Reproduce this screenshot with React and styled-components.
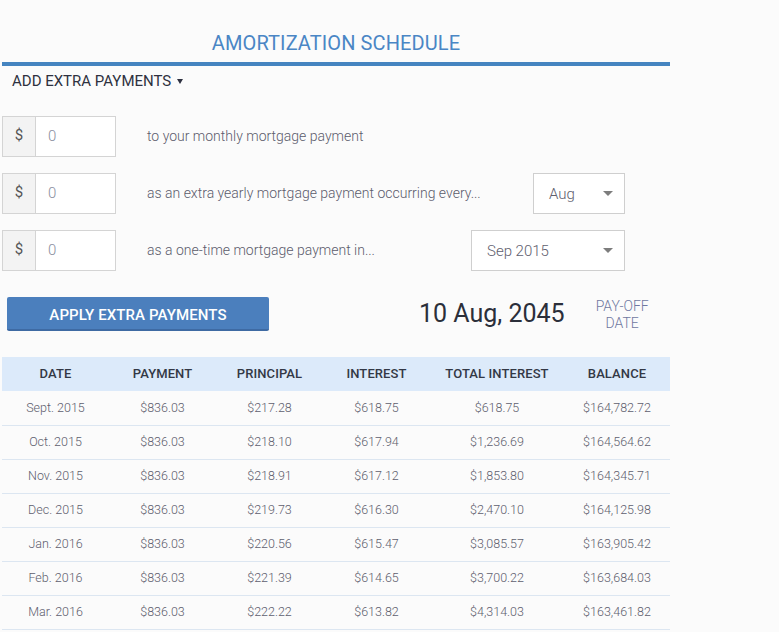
import React from "react";
import styled, { createGlobalStyle } from "styled-components";

const Global = createGlobalStyle`
  html, body { margin: 0; padding: 0; background: #fbfbfb; }
  body { font-family: Roboto, "Liberation Sans", Arial, sans-serif; }
  * { box-sizing: border-box; }
`;

const Page = styled.div`
  width: 668px;
  margin-left: 2px;
  padding-top: 30px;
`;

const Title = styled.h1`
  margin: 0;
  font-size: 20px;
  line-height: 26px;
  font-weight: 400;
  color: #4a86c5;
  text-align: center;
  letter-spacing: 0.1px;
`;

const Rule = styled.div`
  height: 4px;
  margin-top: 6px;
  background: #4584c0;
`;

const Toggle = styled.div`
  display: flex;
  align-items: center;
  gap: 6px;
  height: 28px;
  padding-left: 10px;
  padding-top: 2px;
  font-size: 15px;
  color: #2e3140;
`;

const Caret = styled.span`
  width: 0;
  height: 0;
  border-left: 3.5px solid transparent;
  border-right: 3.5px solid transparent;
  border-top: 5px solid #2e3140;
  margin-top: 1px;
`;

const Form = styled.div`
  display: flex;
  flex-direction: column;
  gap: 16px;
  margin-top: 22px;
`;

const Row = styled.div`
  display: flex;
  align-items: center;
  height: 41px;
`;

const InputGroup = styled.div`
  display: flex;
  height: 41px;
  border: 1px solid #d4d4d4;
  background: #fff;
`;

const Addon = styled.span`
  width: 33px;
  display: flex;
  align-items: center;
  justify-content: center;
  background: #f3f3f3;
  border-right: 1px solid #d4d4d4;
  color: #555;
  font-size: 15px;
  padding-bottom: 3px;
`;

const Input = styled.span`
  width: 79px;
  display: flex;
  align-items: center;
  padding-left: 12px;
  padding-bottom: 1px;
  color: #8a8fa0;
  font-size: 15px;
  font-weight: 300;
`;

const Label = styled.span`
  margin-left: 31px;
  flex: 1;
  font-size: 14px;
  font-weight: 300;
  color: #5c5c6c;
  padding-bottom: 2px;
`;

const Select = styled.div`
  width: ${(p) => p.$w}px;
  height: 41px;
  margin-right: 45px;
  border: 1px solid #cfcfcf;
  background: #fff;
  display: flex;
  align-items: center;
  justify-content: space-between;
  padding: 0 11px 0 15px;
  font-size: 15px;
  font-weight: 300;
  color: #60606e;
`;

const SelectCaret = styled.span`
  width: 0;
  height: 0;
  border-left: 5px solid transparent;
  border-right: 5px solid transparent;
  border-top: 5px solid #7d7d7d;
`;

const ActionRow = styled.div`
  display: flex;
  align-items: center;
  margin-top: 26px;
  height: 34px;
`;

const Button = styled.button`
  margin-left: 5px;
  width: 262px;
  height: 34px;
  border: none;
  border-bottom: 2px solid #3e6aa3;
  border-radius: 2px;
  background: #4b7fbd;
  color: #fff;
  font-family: inherit;
  font-size: 15px;
  font-weight: 500;
  letter-spacing: 0.1px;
  padding: 3px 0 0;
`;

const PayoffDate = styled.div`
  margin-left: 150px;
  font-size: 25px;
  color: #2b2f3a;
  padding-bottom: 2px;
`;

const PayoffLabel = styled.div`
  margin-left: 31px;
  font-size: 14px;
  font-weight: 300;
  line-height: 17px;
  color: #6f78a0;
  text-align: center;
  padding-top: 1px;
`;

const Table = styled.table`
  margin-top: 26px;
  width: 668px;
  border-collapse: collapse;
  table-layout: fixed;
`;

const Th = styled.th`
  background: #dceafa;
  height: 34px;
  font-size: 13px;
  font-weight: 500;
  color: #333845;
  text-align: center;
  padding: 0 0 1px;
  letter-spacing: 0.1px;
`;

const Td = styled.td`
  height: 34px;
  font-size: 12.5px;
  font-weight: 300;
  color: #5e5e6e;
  text-align: center;
  padding: 0 0 1px;
  border-bottom: 1px solid #dce6f1;
`;

const cols = [
  ["DATE", 107],
  ["PAYMENT", 107],
  ["PRINCIPAL", 107],
  ["INTEREST", 107],
  ["TOTAL INTEREST", 134],
  ["BALANCE", 106],
];

const rows = [
  ["Sept. 2015", "$836.03", "$217.28", "$618.75", "$618.75", "$164,782.72"],
  ["Oct. 2015", "$836.03", "$218.10", "$617.94", "$1,236.69", "$164,564.62"],
  ["Nov. 2015", "$836.03", "$218.91", "$617.12", "$1,853.80", "$164,345.71"],
  ["Dec. 2015", "$836.03", "$219.73", "$616.30", "$2,470.10", "$164,125.98"],
  ["Jan. 2016", "$836.03", "$220.56", "$615.47", "$3,085.57", "$163,905.42"],
  ["Feb. 2016", "$836.03", "$221.39", "$614.65", "$3,700.22", "$163,684.03"],
  ["Mar. 2016", "$836.03", "$222.22", "$613.82", "$4,314.03", "$163,461.82"],
];

function MoneyInput() {
  return (
    <InputGroup>
      <Addon>$</Addon>
      <Input>0</Input>
    </InputGroup>
  );
}

export default function App() {
  return (
    <>
      <Global />
      <Page>
        <Title>AMORTIZATION SCHEDULE</Title>
        <Rule />
        <Toggle>
          ADD EXTRA PAYMENTS <Caret />
        </Toggle>
        <Form>
          <Row>
            <MoneyInput />
            <Label>to your monthly mortgage payment</Label>
          </Row>
          <Row>
            <MoneyInput />
            <Label>as an extra yearly mortgage payment occurring every...</Label>
            <Select $w={92}>
              Aug <SelectCaret />
            </Select>
          </Row>
          <Row>
            <MoneyInput />
            <Label>as a one-time mortgage payment in...</Label>
            <Select $w={154}>
              Sep 2015 <SelectCaret />
            </Select>
          </Row>
        </Form>
        <ActionRow>
          <Button>APPLY EXTRA PAYMENTS</Button>
          <PayoffDate>10 Aug, 2045</PayoffDate>
          <PayoffLabel>
            PAY-OFF
            <br />
            DATE
          </PayoffLabel>
        </ActionRow>
        <Table>
          <colgroup>
            {cols.map(([n, w]) => (
              <col key={n} style={{ width: w }} />
            ))}
          </colgroup>
          <thead>
            <tr>
              {cols.map(([n]) => (
                <Th key={n}>{n}</Th>
              ))}
            </tr>
          </thead>
          <tbody>
            {rows.map((r) => (
              <tr key={r[0]}>
                {r.map((c, i) => (
                  <Td key={i}>{c}</Td>
                ))}
              </tr>
            ))}
          </tbody>
        </Table>
      </Page>
    </>
  );
}
